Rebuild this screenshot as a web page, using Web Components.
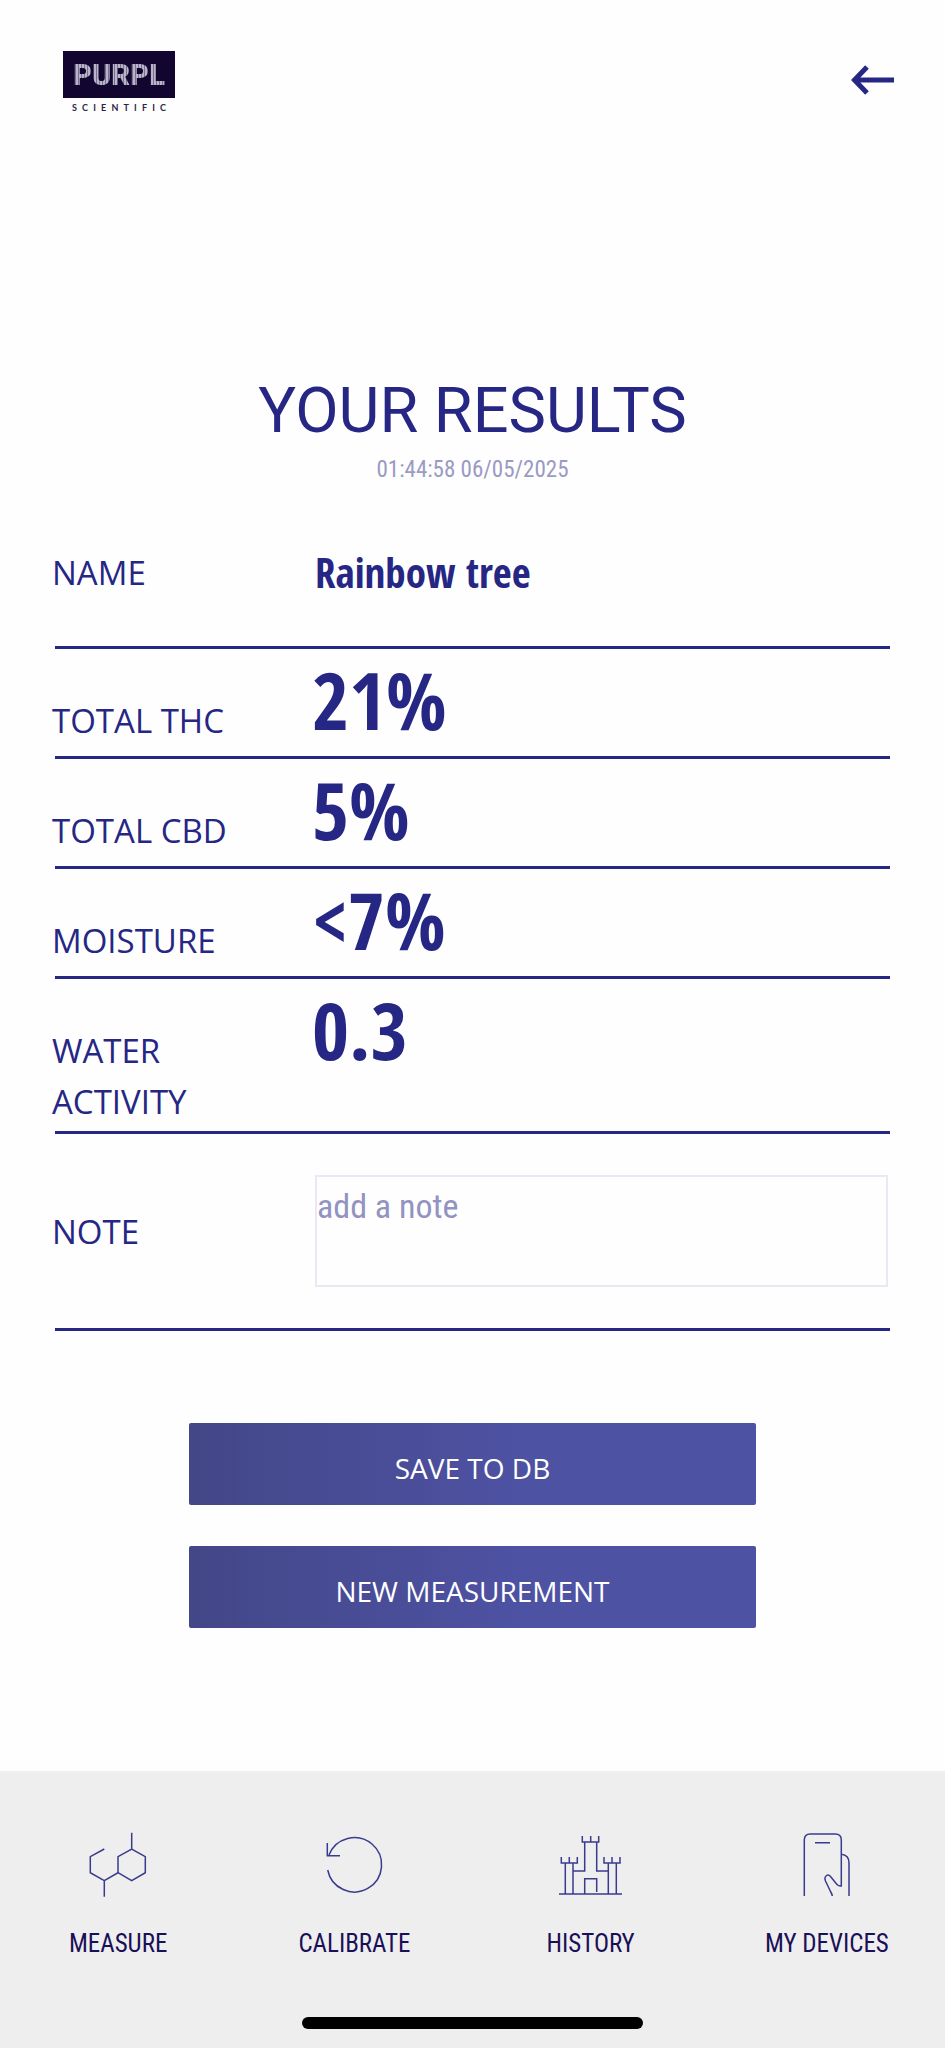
<!DOCTYPE html>
<html lang="en">
<head>
<meta charset="utf-8">
<meta name="viewport" content="width=device-width, initial-scale=1">
<title>Your Results</title>
<style>
  body {
    margin: 0;
    background: #fefefe;
    color: #262784;
    font-family: "Open Sans", "Noto Sans", sans-serif;
    --bold-condensed: "Open Sans Condensed", "Roboto Condensed", "Open Sans", sans-serif;
    --condensed: "Roboto Condensed", Roboto, sans-serif;
  }
</style>
</head>
<body>
<results-app></results-app>
<script>
  const define = (name, html, setup) => {
    const template = document.createElement('template');
    template.innerHTML = html;
    customElements.define(name, class extends HTMLElement {
      constructor() {
        super();
        this.attachShadow({ mode: 'open' }).append(template.content.cloneNode(true));
      }
      connectedCallback() {
        if (setup) setup(this, this.shadowRoot);
      }
    });
  };

  define('brand-logo', `
    <style>
      :host { display: flex; flex-direction: column; align-items: center; gap: 4px; width: 112px; }
      .mark {
        width: 100%; height: 47px; background: #120530;
        display: flex; align-items: center; justify-content: center;
      }
      .word {
        font: 900 29px/32px Roboto, sans-serif;
        color: transparent;
        background: repeating-linear-gradient(90deg, #b9b4c8 0 2px, #77708f 2px 3px);
        -webkit-background-clip: text; background-clip: text;
      }
      .sub {
        font: 700 9px/11px Lato, sans-serif; color: #2b2545;
        width: 94px; display: flex; justify-content: space-between;
      }
    </style>
    <div class="mark"><span class="word">PURPL</span></div>
    <div class="sub"><span>S</span><span>C</span><span>I</span><span>E</span><span>N</span><span>T</span><span>I</span><span>F</span><span>I</span><span>C</span></div>
  `);

  define('app-header', `
    <style>
      :host { display: block; }
      header {
        display: flex; justify-content: space-between; align-items: flex-start;
        padding: 51px 50px 0 63px;
      }
      button { border: 0; background: none; padding: 0; margin-top: 11px; color: #262784; cursor: pointer; }
      svg { display: block; }
    </style>
    <header>
      <brand-logo></brand-logo>
      <button type="button" aria-label="Back">
        <svg width="44" height="36" viewBox="0 0 44 36" fill="none" stroke="currentColor" stroke-width="5">
          <path d="M43 18H4M16 5 3.500 18 16 31"/>
        </svg>
      </button>
    </header>
  `);

  define('result-row', `
    <style>
      :host {
        display: grid; grid-template-columns: 260px 1fr; align-items: start;
        min-height: 107px; border-bottom: 3px solid #262784;
      }
      .label { font-size: 33px; line-height: 51px; padding: 46px 60px 4px 0; margin-left: -3px; }
      .value { font: 700 80px/82px var(--bold-condensed); margin-top: 9px; margin-left: -3px; }
      :host([kind="name"]) { align-items: center; padding: 38px 0 48px; min-height: 0; }
      :host([kind="name"]) .value { font-size: 41px; line-height: 51px; margin: 0; }
      :host([kind="name"]) .label { padding: 0; }
    </style>
    <div class="label"><slot name="label"></slot></div>
    <div class="value"><slot></slot></div>
  `);

  define('note-row', `
    <style>
      :host {
        display: grid; grid-template-columns: 260px 1fr; align-items: center;
        padding: 41px 0 41px; border-bottom: 3px solid #262784;
      }
      label { font-size: 33px; line-height: 51px; margin-left: -3px; }
      textarea {
        display: block; box-sizing: border-box; height: 112px; margin-right: 2px; padding: 4px 0;
        border: 2px solid #e9e9f3; background: transparent; resize: none; outline: 0;
        font: 34px/50px var(--condensed); color: #262784;
      }
      textarea::placeholder { color: #9293c1; opacity: 1; }
    </style>
    <label for="note">NOTE</label>
    <textarea id="note" placeholder="add a note"></textarea>
  `);

  define('action-button', `
    <style>
      :host { display: block; }
      button {
        display: block; box-sizing: border-box; width: 100%; height: 82px; padding: 8px 0 0;
        border: 0; border-radius: 2px; color: #fff; cursor: pointer;
        background: linear-gradient(90deg, #434788, #4e52a3 60%);
        font: 28px/40px "Open Sans", "Noto Sans", sans-serif;
      }
    </style>
    <button type="button"><slot></slot></button>
  `);

  const icons = {
    measure: '<path d="M26.300 24 12.300 31.700V47.700L26.300 55.700V71.700M26.300 55.700 40 47.700V31.700L53.700 24 67.300 31.700V47.700L53.700 55.700 40 47.700M53.700 24V7.700"/>',
    calibrate: '<path d="M13.700 45A27.200 27.200 0 1 0 15 30M13.300 18V30.700H26"/>',
    history: '<path d="M8 69H71M14.300 69V38M22 69V38M10.300 32V38H26.300V32M18.300 32V38M22 46H33.700V17M45.700 17V46H57.300M31.300 11V17H47.700V11M39.700 11V17M57.300 69V38M65.300 69V38M53 32V38H69V32M61 32V38M33.700 69V53.700H45.700V67"/>',
    devices: '<path d="M17.300 71V15Q17.300 9 23.300 9H48.300Q54.300 9 54.300 15V61Q52 61.500 50 59.500L43.500 51.500C41 48.500 36.500 51 38.500 56L43.500 66.500Q45 69 45.300 71M54.300 29.300Q62 30 62 38V71M28 17.700H43"/>'
  };

  define('nav-item', `
    <style>
      :host { display: block; flex: 1 1 0; }
      a {
        display: flex; flex-direction: column; align-items: center; gap: 25px;
        color: #1a1057; text-decoration: none; font: 25px/28px var(--condensed); white-space: nowrap;
      }
      svg { display: block; width: 80px; height: 80px; fill: none; stroke: #393b8e; stroke-width: 1.500; }
    </style>
    <a href="#"><svg viewBox="0 0 80 80" aria-hidden="true"></svg><span><slot></slot></span></a>
  `, (host, root) => {
    const icon = host.getAttribute('icon');
    root.querySelector('svg').innerHTML = icons[icon];
    root.querySelector('a').setAttribute('href', '#' + icon);
  });

  define('tab-bar', `
    <style>
      :host { display: block; background: #eee; }
      nav { display: flex; padding-top: 54px; }
      .home { width: 36%; height: 12px; border-radius: 6px; background: #000; margin: 59px auto 0; }
      footer { padding-bottom: 19px; }
    </style>
    <footer>
      <nav aria-label="Main"><slot></slot></nav>
      <div class="home"></div>
    </footer>
  `);

  define('results-app', `
    <style>
      :host { display: flex; flex-direction: column; min-height: 100vh; }
      main { padding: 262px 55px 0; }
      .head { text-align: center; }
      h1 { margin: 0; font: 400 63px/72px Roboto, sans-serif; }
      time { display: block; color: #9a9ac4; font: 23px/30px var(--condensed); margin: 8px 0 24px; }
      .actions { width: 60vw; margin: 92px auto 0; display: grid; gap: 41px; padding-bottom: 60px; }
      tab-bar { margin-top: auto; }
    </style>
    <app-header></app-header>
    <main>
      <div class="head">
        <h1>YOUR RESULTS</h1>
        <time datetime="2025-05-06T01:44:58">01:44:58 06/05/2025</time>
      </div>
      <result-row kind="name"><span slot="label">NAME</span>Rainbow tree</result-row>
      <result-row><span slot="label">TOTAL THC</span>21%</result-row>
      <result-row><span slot="label">TOTAL CBD</span>5%</result-row>
      <result-row><span slot="label">MOISTURE</span>&lt;7%</result-row>
      <result-row><span slot="label">WATER ACTIVITY</span>0.3</result-row>
      <note-row></note-row>
      <div class="actions">
        <action-button>SAVE TO DB</action-button>
        <action-button>NEW MEASUREMENT</action-button>
      </div>
    </main>
    <tab-bar>
      <nav-item icon="measure">MEASURE</nav-item>
      <nav-item icon="calibrate">CALIBRATE</nav-item>
      <nav-item icon="history">HISTORY</nav-item>
      <nav-item icon="devices">MY DEVICES</nav-item>
    </tab-bar>
  `);
</script>
</body>
</html>
